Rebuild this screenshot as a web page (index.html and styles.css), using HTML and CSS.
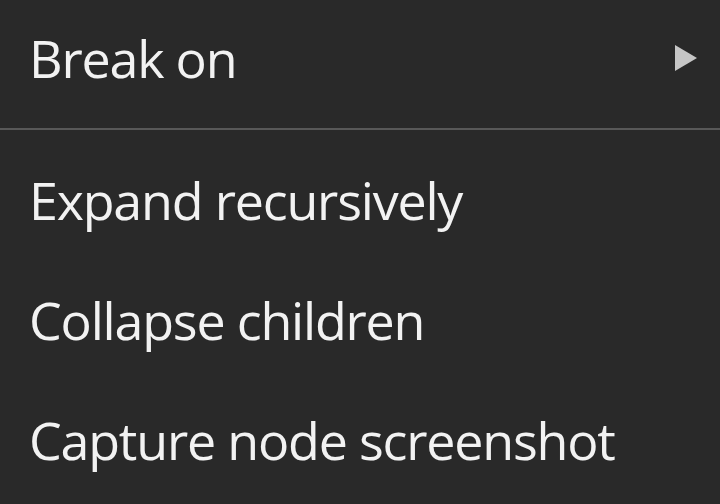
FILE: index.html
```html
<!DOCTYPE html>
<html>
<head>
<meta charset="utf-8">
<link rel="stylesheet" href="styles.css">
</head>
<body>
<div class="menu">
  <div class="item item-first">
    <span class="label">Break on</span>
    <svg class="arrow" width="24" height="28" viewBox="0 0 24 28"><path d="M1 1 L23 14 L1 27 Z" fill="#c6c6c6"/></svg>
  </div>
  <div class="sep"></div>
  <div class="item"><span class="label">Expand recursively</span></div>
  <div class="item"><span class="label">Collapse children</span></div>
  <div class="item"><span class="label">Capture node screenshot</span></div>
</div>
</body>
</html>
```
FILE: styles.css
```css
html, body {
  margin: 0;
  padding: 0;
  background: #292929;
  height: 100%;
  overflow: hidden;
}
.menu {
  display: flex;
  flex-direction: column;
  font-family: "Open Sans", "Noto Sans", sans-serif;
  color: #f2f2f2;
  font-size: 52px;
  letter-spacing: -1.2px;
}
.item {
  height: 120px;
  display: flex;
  align-items: center;
  justify-content: space-between;
  padding: 0 22px 0 29px;
}
.item-first {
  height: 116px;
}
.label {
  white-space: nowrap;
  line-height: 1;
}
.sep {
  height: 2px;
  background: #585858;
  margin: 12px 0 10px;
}
.arrow {
  display: block;
}
```
